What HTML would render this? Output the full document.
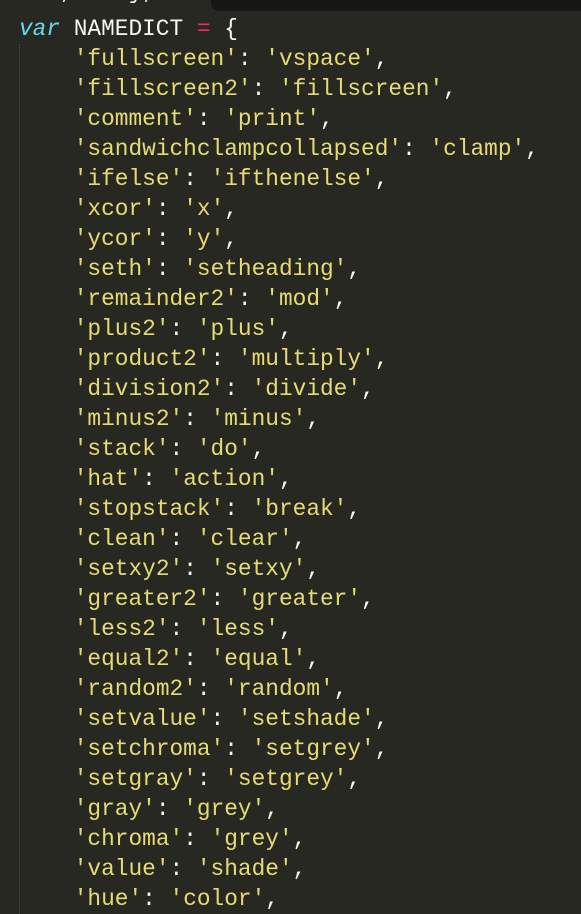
<!DOCTYPE html>
<html><head><meta charset="utf-8"><style>
html,body{margin:0;padding:0;}
body{width:581px;height:909px;background:#272822;overflow:hidden;position:relative;font-family:"Liberation Mono",monospace;font-size:22.8px;}
.tab{position:absolute;left:211px;top:0;right:0;height:11px;background:#161714;border-bottom-left-radius:8px;}
.guide{position:absolute;left:19px;top:44px;height:870px;border-left:1px dotted #4a4b44;}
.l{position:absolute;left:19px;white-space:pre;line-height:30px;height:30px;color:#f8f8f2;}
.s{color:#e6db74}.k{color:#66d9ef;font-style:italic}.o{color:#f92672}
</style></head><body>
<div class="tab"></div>
<div class="guide"></div>
<div class="l" style="top:-23px"><span class="s">  '</span>,  '<span class="s">'</span>},</div>
<div class="l" style="top:14px"><span class="k">var</span> NAMEDICT <span class="o">=</span> {</div>
<div class="l" style="top:44px">    <span class="s">'fullscreen'</span>: <span class="s">'vspace'</span>,</div>
<div class="l" style="top:74px">    <span class="s">'fillscreen2'</span>: <span class="s">'fillscreen'</span>,</div>
<div class="l" style="top:104px">    <span class="s">'comment'</span>: <span class="s">'print'</span>,</div>
<div class="l" style="top:134px">    <span class="s">'sandwichclampcollapsed'</span>: <span class="s">'clamp'</span>,</div>
<div class="l" style="top:164px">    <span class="s">'ifelse'</span>: <span class="s">'ifthenelse'</span>,</div>
<div class="l" style="top:194px">    <span class="s">'xcor'</span>: <span class="s">'x'</span>,</div>
<div class="l" style="top:224px">    <span class="s">'ycor'</span>: <span class="s">'y'</span>,</div>
<div class="l" style="top:254px">    <span class="s">'seth'</span>: <span class="s">'setheading'</span>,</div>
<div class="l" style="top:284px">    <span class="s">'remainder2'</span>: <span class="s">'mod'</span>,</div>
<div class="l" style="top:314px">    <span class="s">'plus2'</span>: <span class="s">'plus'</span>,</div>
<div class="l" style="top:344px">    <span class="s">'product2'</span>: <span class="s">'multiply'</span>,</div>
<div class="l" style="top:374px">    <span class="s">'division2'</span>: <span class="s">'divide'</span>,</div>
<div class="l" style="top:404px">    <span class="s">'minus2'</span>: <span class="s">'minus'</span>,</div>
<div class="l" style="top:434px">    <span class="s">'stack'</span>: <span class="s">'do'</span>,</div>
<div class="l" style="top:464px">    <span class="s">'hat'</span>: <span class="s">'action'</span>,</div>
<div class="l" style="top:494px">    <span class="s">'stopstack'</span>: <span class="s">'break'</span>,</div>
<div class="l" style="top:524px">    <span class="s">'clean'</span>: <span class="s">'clear'</span>,</div>
<div class="l" style="top:554px">    <span class="s">'setxy2'</span>: <span class="s">'setxy'</span>,</div>
<div class="l" style="top:584px">    <span class="s">'greater2'</span>: <span class="s">'greater'</span>,</div>
<div class="l" style="top:614px">    <span class="s">'less2'</span>: <span class="s">'less'</span>,</div>
<div class="l" style="top:644px">    <span class="s">'equal2'</span>: <span class="s">'equal'</span>,</div>
<div class="l" style="top:674px">    <span class="s">'random2'</span>: <span class="s">'random'</span>,</div>
<div class="l" style="top:704px">    <span class="s">'setvalue'</span>: <span class="s">'setshade'</span>,</div>
<div class="l" style="top:734px">    <span class="s">'setchroma'</span>: <span class="s">'setgrey'</span>,</div>
<div class="l" style="top:764px">    <span class="s">'setgray'</span>: <span class="s">'setgrey'</span>,</div>
<div class="l" style="top:794px">    <span class="s">'gray'</span>: <span class="s">'grey'</span>,</div>
<div class="l" style="top:824px">    <span class="s">'chroma'</span>: <span class="s">'grey'</span>,</div>
<div class="l" style="top:854px">    <span class="s">'value'</span>: <span class="s">'shade'</span>,</div>
<div class="l" style="top:884px">    <span class="s">'hue'</span>: <span class="s">'color'</span>,</div>
</body></html>
